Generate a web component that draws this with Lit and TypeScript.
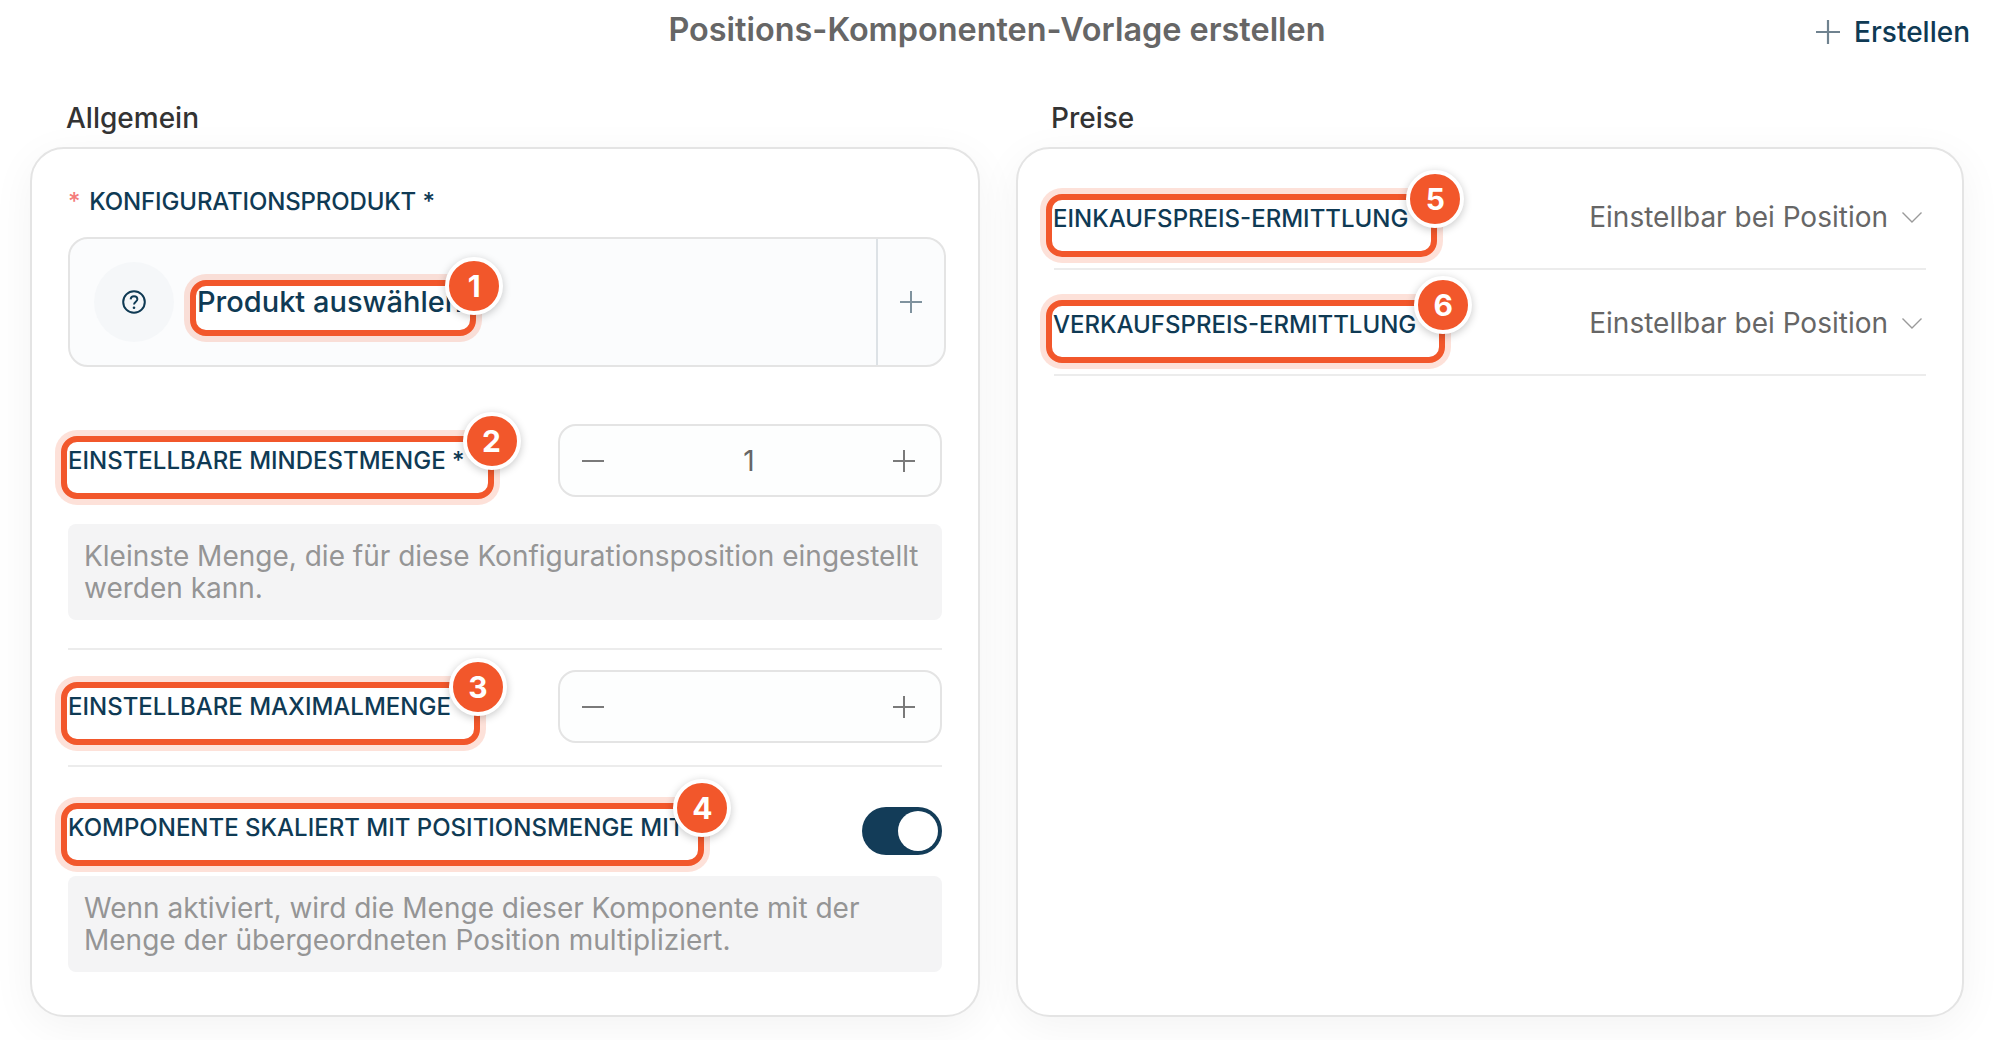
import { LitElement, html, css, svg } from "lit";
import { customElement } from "lit/decorators.js";

const plus = (size: number, color: string) => html`<svg class="ico" width=${size} height=${size} viewBox="0 0 22 22" fill="none" stroke=${color} stroke-width="2"><path d="M11 0V22M0 11H22"/></svg>`;
const minus = html`<svg class="ico" width="22" height="22" viewBox="0 0 22 22" fill="none" stroke="#7a7a7a" stroke-width="2"><path d="M0 11H22"/></svg>`;
const chevron = html`<svg class="ico" width="20" height="20" viewBox="0 0 20 20" fill="none" stroke="#9a9a9a" stroke-width="1.4"><path d="M0.5 5.5L10 15L19.5 5.5"/></svg>`;
const question = html`<svg class="ico" width="24" height="24" viewBox="0 0 24 24" fill="none" stroke="#0f3a54" stroke-width="2"><circle cx="12" cy="12" r="10.8"/><path d="M8.6 9.4C8.8 7.4 10.2 6.3 12 6.3C14 6.3 15.4 7.6 15.4 9.2C15.4 11.6 12 11.8 12 14.6" stroke-width="1.9"/>${svg`<circle cx="12" cy="17.8" r="1.3" fill="#0f3a54" stroke="none"/>`}</svg>`;

@customElement("app-root")
export class AppRoot extends LitElement {
  static styles = css`
    :host { display: block; width: 2000px; height: 1040px; overflow: hidden; background: #fff; font-family: Inter, "Liberation Sans", sans-serif; color: #0f3a54; }
    * { box-sizing: border-box; }
    .ico { display: block; flex: none; }
    .header { display: grid; grid-template-columns: 1fr auto 1fr; height: 58px; align-items: center; }
    .title { grid-column: 2; font-size: 32.4px; font-weight: 600; color: #666; margin-left: -6px; }
    .create { grid-column: 3; justify-self: end; display: flex; align-items: center; gap: 14px; font-size: 28px; font-weight: 500; margin: 6px 30px 0 0; }
    .columns { display: grid; grid-template-columns: 950px 948px; column-gap: 36px; padding-left: 30px; margin-top: 44px; }
    .column-title { font-size: 28px; font-weight: 500; color: #333; line-height: 32px; height: 45px; padding-left: 36px; }
    .column-title.narrow { padding-left: 35px; }
    .card { background: #fff; border: 2px solid #e4e4e4; border-radius: 34px; box-shadow: 0 10px 44px rgba(0, 0, 0, 0.05); height: 870px; }
    .left { padding: 38px 36px 0 36px; }
    .right { padding: 15px 36px 0 36px; }
    .label { position: relative; display: inline-block; font-size: 24px; font-weight: 500; line-height: 30px; white-space: nowrap; isolation: isolate; }
    .label.tight { letter-spacing: -0.15px; }
    .label .text { position: relative; z-index: 1; }
    .hl { position: absolute; left: -7px; right: -29px; top: -10px; bottom: -23px; z-index: 0; background: #fff; border: 6px solid #f2572b; border-radius: 16px; box-shadow: 0 0 0 6px rgba(242, 87, 43, 0.18); }
    .badge { position: absolute; z-index: 2; right: -27px; top: -5px; width: 58px; height: 58px; transform: translate(50%, -50%); border-radius: 50%; background: #f2572b; border: 4px solid #fff; box-shadow: 0 2px 8px rgba(0, 0, 0, 0.22); color: #fff; font-size: 30px; font-weight: 700; letter-spacing: 0; display: flex; align-items: center; justify-content: center; }
    .req { color: #f47c7c; margin-right: 9px; }
    .product { display: flex; height: 130px; margin: 20px -4px 0 0; border: 2px solid #e4e4e4; border-radius: 20px; background: #fbfcfd; }
    .product-main { flex: 1; display: flex; align-items: center; gap: 23px; padding-left: 24px; }
    .circle { width: 80px; height: 80px; border-radius: 50%; background: #f5f7f9; display: flex; align-items: center; justify-content: center; }
    .label.product-label { font-size: 29px; line-height: 34px; }
    .product-label .hl { left: -7px; right: -14px; top: -5px; bottom: -17px; }
    .product-label .badge { right: -12px; top: 1px; }
    .product-add { width: 68px; border-left: 2px solid #dde2e6; display: flex; align-items: center; justify-content: center; }
    .row { display: flex; justify-content: space-between; }
    .center { align-items: center; }
    .stepper { width: 384px; height: 73px; border: 2px solid #e4e4e4; border-radius: 18px; display: flex; align-items: center; overflow: hidden; background: #fdfefe; }
    .step { width: 66px; height: 100%; display: flex; align-items: center; justify-content: center; }
    .step.inc { width: 72px; }
    .value { flex: 1; text-align: center; font-size: 28px; color: #666; padding-left: 4px; }
    .m57 { margin-top: 57px; }
    .hint { margin-top: 27px; height: 96px; padding: 16px 16px 0; background: #f4f4f5; border-radius: 8px; color: #959595; font-size: 28px; line-height: 32px; }
    .divider { height: 2px; background: #ececec; }
    .d1 { margin-top: 28px; }
    .m20 { margin-top: 20px; }
    .m22 { margin-top: 22px; }
    .row4 { margin-top: 40px; align-items: flex-start; }
    .row4 .label { margin-top: 6px; }
    .row4 .hl { right: -20px; }
    .row4 .badge { right: -18px; }
    .toggle { width: 80px; height: 48px; border-radius: 24px; background: #133c58; padding: 4px; display: flex; justify-content: flex-end; }
    .knob { width: 40px; height: 40px; border-radius: 50%; background: #fff; }
    .hint2 { margin-top: 21px; }
    .price { height: 106px; border-bottom: 2px solid #ececec; display: flex; align-items: center; justify-content: space-between; padding-right: 4px; }
    .price .label { margin: 5px 0 0 -1px; }
    .select { display: flex; align-items: center; gap: 14px; font-size: 28px; color: #666; margin-top: 1px; }
  `;

  private tag(text: string, n: number, extra = "") {
    return html`<span class="label ${extra}"><span class="hl"></span><span class="text">${text}</span><span class="badge">${n}</span></span>`;
  }

  private stepper(value: string) {
    return html`<div class="stepper"><div class="step">${minus}</div><div class="value">${value}</div><div class="step inc">${plus(22, "#7a7a7a")}</div></div>`;
  }

  private price(text: string, n: number) {
    return html`<div class="price">${this.tag(text, n)}<div class="select">Einstellbar bei Position ${chevron}</div></div>`;
  }

  render() {
    return html`
      <div class="header">
        <div class="title">Positions-Komponenten-Vorlage erstellen</div>
        <div class="create">${plus(24, "#6f828f")}Erstellen</div>
      </div>
      <div class="columns">
        <div>
          <div class="column-title">Allgemein</div>
          <div class="card left">
            <div class="label tight"><span class="req">*</span>KONFIGURATIONSPRODUKT *</div>
            <div class="product">
              <div class="product-main">
                <div class="circle">${question}</div>
                ${this.tag("Produkt auswählen", 1, "product-label")}
              </div>
              <div class="product-add">${plus(22, "#7f929e")}</div>
            </div>
            <div class="row center m57">${this.tag("EINSTELLBARE MINDESTMENGE *", 2)}${this.stepper("1")}</div>
            <div class="hint">Kleinste Menge, die für diese Konfigurationsposition eingestellt werden kann.</div>
            <div class="divider d1"></div>
            <div class="row center m20">${this.tag("EINSTELLBARE MAXIMALMENGE", 3)}${this.stepper("")}</div>
            <div class="divider m22"></div>
            <div class="row row4">${this.tag("KOMPONENTE SKALIERT MIT POSITIONSMENGE MIT", 4)}<div class="toggle"><div class="knob"></div></div></div>
            <div class="hint hint2">Wenn aktiviert, wird die Menge dieser Komponente mit der Menge der übergeordneten Position multipliziert.</div>
          </div>
        </div>
        <div>
          <div class="column-title narrow">Preise</div>
          <div class="card right">
            ${this.price("EINKAUFSPREIS-ERMITTLUNG", 5)}
            ${this.price("VERKAUFSPREIS-ERMITTLUNG", 6)}
          </div>
        </div>
      </div>
    `;
  }
}
